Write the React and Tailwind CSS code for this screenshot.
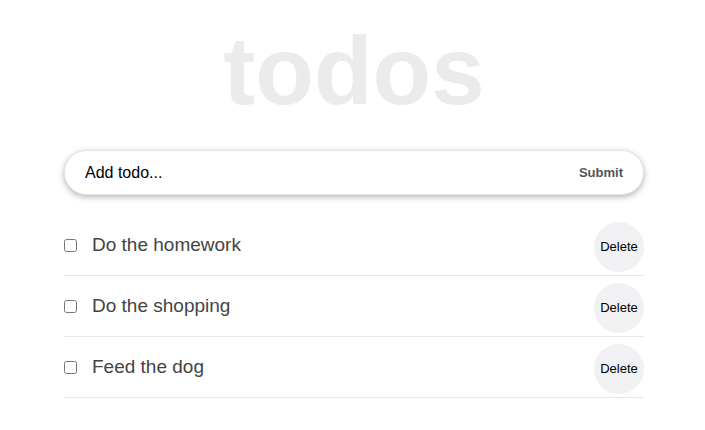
import React, { useState } from "react";

const initialTodos = [
  { id: 1, text: "Do the homework", done: false },
  { id: 2, text: "Do the shopping", done: false },
  { id: 3, text: "Feed the dog", done: false },
];

const App = () => {
  const [todos, setTodos] = useState(initialTodos);
  const [value, setValue] = useState("");

  const addTodo = (e) => {
    e.preventDefault();
    if (!value.trim()) return;
    setTodos([...todos, { id: Date.now(), text: value.trim(), done: false }]);
    setValue("");
  };

  return (
    <div className="min-h-screen bg-white font-['Liberation_Sans',Arial,sans-serif]">
      <div className="w-[580px] ml-16 pt-4">
        {/* TITLE */}
        <h1 className="text-center text-[96px] font-bold leading-[110px] text-[#ebebeb]">
          todos
        </h1>

        {/* INPUT */}
        <form
          onSubmit={addTodo}
          className="mt-6 h-[45px] flex items-center rounded-full bg-white border border-[#e5e5e5] shadow-[0_2px_6px_rgba(0,0,0,0.3)] pl-5 pr-5"
        >
          <input
            value={value}
            onChange={(e) => setValue(e.target.value)}
            placeholder="Add todo..."
            className="flex-1 text-base outline-none bg-transparent text-black placeholder:text-black"
          />
          <button type="submit" className="text-[13px] font-bold text-[#555]">
            Submit
          </button>
        </form>

        {/* LIST */}
        <ul className="mt-5">
          {todos.map((todo) => (
            <li
              key={todo.id}
              className="flex items-center py-[5px] border-b border-[#e6e6e6]"
            >
              <input
                type="checkbox"
                checked={todo.done}
                onChange={() =>
                  setTodos(todos.map((t) => (t.id === todo.id ? { ...t, done: !t.done } : t)))
                }
                className="w-[13px] h-[13px]"
              />
              <span className="ml-[15px] flex-1 text-[19px] text-[#444]">{todo.text}</span>
              <button
                onClick={() => setTodos(todos.filter((t) => t.id !== todo.id))}
                className="w-[50px] h-[50px] translate-y-[2px] rounded-full bg-[#f1f1f3] text-[13px] text-black"
              >
                Delete
              </button>
            </li>
          ))}
        </ul>
      </div>
    </div>
  );
};

export default App;
